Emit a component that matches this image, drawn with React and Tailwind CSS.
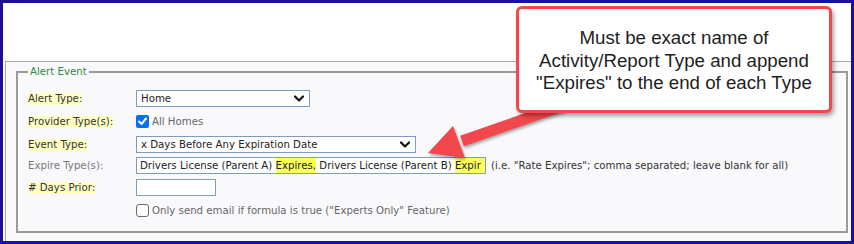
import React from 'react';

// small chevron used inside the fake selects
const Chevron = () => (
    <svg width="10" height="7" viewBox="0 0 10 7" className="shrink-0">
        <polyline points="1,1.5 5,5.5 9,1.5" fill="none" stroke="#111" strokeWidth="2.2" strokeLinecap="round" strokeLinejoin="round" />
    </svg>
);

const Select = ({ value, width }) => (
    <div className={`${width} h-[17px] border border-[#7f9db9] bg-white flex items-center justify-between pl-[4px] pr-[5px] text-[#222]`}>
        <span>{value}</span>
        <Chevron />
    </div>
);

const CheckBox = ({ checked }) =>
    checked ? (
        <span className="w-[13px] h-[13px] rounded-[2px] bg-[#0b6ef0] flex items-center justify-center">
            <svg width="11" height="11" viewBox="0 0 11 11">
                <polyline points="2,5.5 4.5,8 9,2.5" fill="none" stroke="#fff" strokeWidth="2" strokeLinecap="round" strokeLinejoin="round" />
            </svg>
        </span>
    ) : (
        <span className="w-[13px] h-[13px] rounded-[3px] border border-[#6b6b6b] bg-white" />
    );

const Label = ({ children, marked = true }) => (
    <div className="w-[108px] shrink-0">
        {marked ? (
            <span className="inline-block bg-[#ffffc4] leading-[12px] text-[#333]">{children}</span>
        ) : (
            <span className="text-[#777]">{children}</span>
        )}
    </div>
);

export default function App() {
    return (
        <div className="relative w-[854px] h-[244px] bg-[#1b0f9b] p-[3px] font-['DejaVu_Sans',sans-serif] text-[10.2px]">
            <div className="w-full h-full bg-white flex flex-col">
                <div className="h-[58px] shrink-0" />
                <div className="flex-1 ml-[2px] border-t border-l border-[#a8a8a8] bg-[#f9f9fc] pt-[4px] pl-[10px] pr-[3px]">
                    <fieldset className="border-2 border-[#9a9a9a] pl-[10px] pt-[12px] pb-[14px]">
                        <legend className="px-[2px] leading-[12px] text-[#2b8a3e]">Alert Event</legend>

                        <div className="flex items-center h-[17px]">
                            <Label>Alert Type:</Label>
                            <Select value="Home" width="w-[174px]" />
                        </div>

                        <div className="flex items-center h-[13px] mt-[8px]">
                            <Label>Provider Type(s):</Label>
                            <CheckBox checked />
                            <span className="ml-[3px] text-[#666]">All Homes</span>
                        </div>

                        <div className="flex items-center h-[17px] mt-[8px]">
                            <Label>Event Type:</Label>
                            <Select value="x Days Before Any Expiration Date" width="w-[280px]" />
                        </div>

                        <div className="flex items-center h-[17px] mt-[4px]">
                            <Label marked={false}>Expire Type(s):</Label>
                            <div className="w-[350px] h-[17px] border border-[#7f9db9] bg-white pl-[3px] overflow-hidden whitespace-nowrap leading-[15px] text-[#222]">
                                Drivers License (Parent A) <span className="inline-block bg-[#ffff5e]">Expires,</span> Drivers License (Parent B) <span className="inline-block bg-[#ffff5e] pr-[4px]">Expir</span>
                            </div>
                            <span className="ml-[5px] text-[#333]">(i.e. "Rate Expires"; comma separated; leave blank for all)</span>
                        </div>

                        <div className="flex items-center h-[17px] mt-[5px]">
                            <Label># Days Prior:</Label>
                            <div className="w-[80px] h-[17px] border border-[#7f9db9] bg-white" />
                        </div>

                        <div className="flex items-center h-[13px] mt-[8px] pl-[108px]">
                            <CheckBox />
                            <span className="ml-[3px] text-[#666]">Only send email if formula is true ("Experts Only" Feature)</span>
                        </div>
                    </fieldset>
                </div>
            </div>

            {/* annotation arrow */}
            <svg width="854" height="244" viewBox="0 0 854 244" className="absolute left-0 top-0 pointer-events-none drop-shadow-[1px_2px_1.5px_rgba(0,0,0,0.35)]">
                <line x1="565" y1="105" x2="462" y2="141" stroke="#f2474c" strokeWidth="11" />
                <polygon points="428,153 453,126 465,158" fill="#f2474c" />
            </svg>

            {/* annotation callout */}
            <div className="absolute left-[516px] top-[6px] w-[316px] h-[107px] bg-white border-[3px] border-[#f2474c] rounded-[6px] shadow-[2px_3px_4px_rgba(0,0,0,0.35)] pt-[18px] text-center font-['Liberation_Sans',Arial,sans-serif] text-[18.7px] leading-[22.5px] text-[#1e1e1e]">
                Must be exact name of<br />
                Activity/Report Type and append<br />
                "Expires" to the end of each Type
            </div>
        </div>
    );
}
